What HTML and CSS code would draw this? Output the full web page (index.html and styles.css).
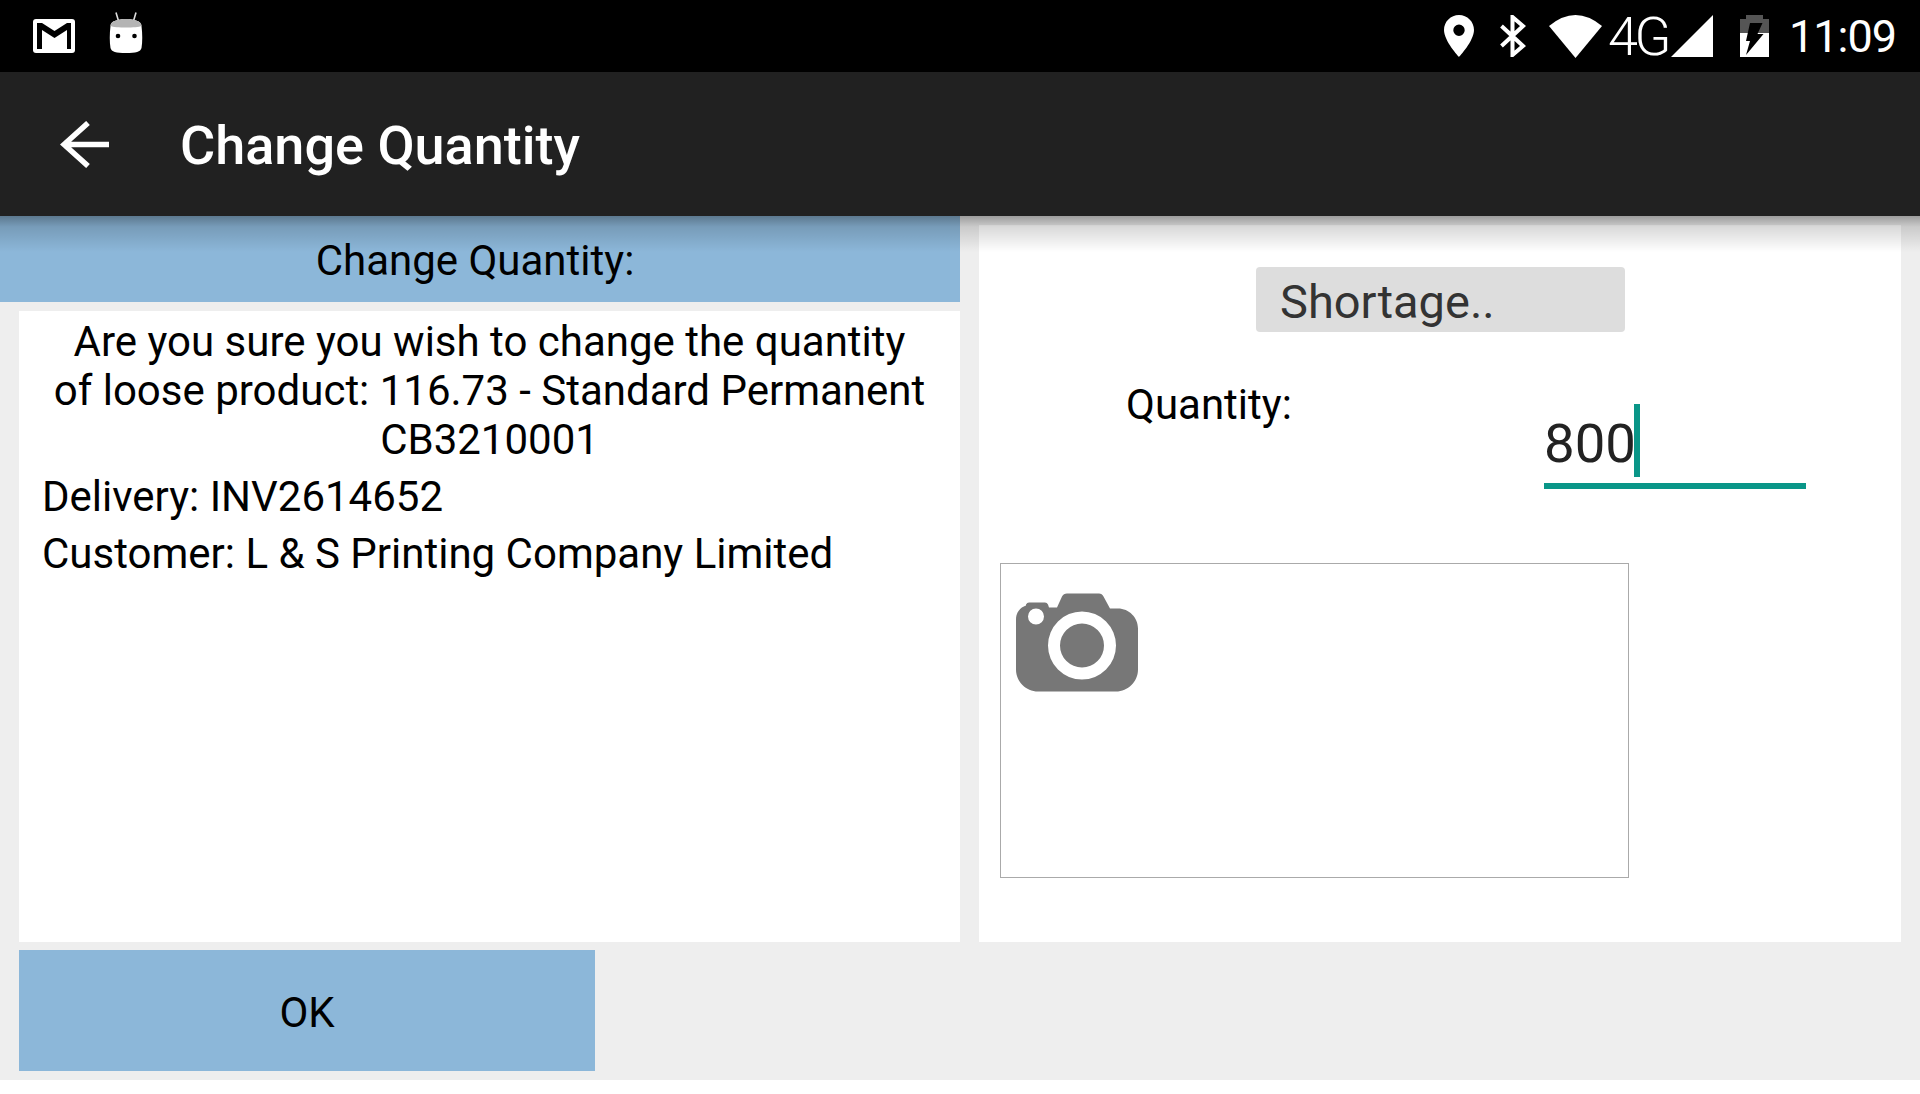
FILE: index.html
```html
<!DOCTYPE html>
<html lang="en">
<head>
<meta charset="utf-8">
<title>Change Quantity</title>
<link rel="stylesheet" href="styles.css">
</head>
<body>
<div class="screen">
  <header class="status">
    <svg class="ic-gmail" viewBox="0 0 42 34"><rect width="42" height="34" rx="3" fill="#fff"/><path d="M4 4H9L21.500 12 34 4H38V30H34V11L21.500 19 9 11V30H4Z" fill="#000"/></svg>
    <svg class="ic-bot" viewBox="0 0 34 42"><path d="M7 0.500 9.500 9M27 0.500 24.500 9" stroke="#ddd" stroke-width="1.600" fill="none"/><path d="M1.500 14C1.500 9 9 7 17 7S32.500 9 32.500 14C33.500 22 33.500 30 32.500 36 31.500 40 27 41 17 41S2.500 40 1.500 36C.5 30 .5 22 1.500 14Z" fill="#fff"/><path d="M1.500 14C1.500 9 9 7 17 7S32.500 9 32.500 14C28 16 6 16 1.500 14Z" fill="#b4b4b4"/><circle cx="9" cy="24" r="2.300" fill="#000"/><circle cx="25.500" cy="24" r="2.300" fill="#000"/></svg>
    <div class="status-right">
      <svg class="ic-loc" viewBox="0 0 30 42"><path fill-rule="evenodd" d="M15 0C6.700 0 0 6.700 0 15 0 26 15 42 15 42S30 26 30 15C30 6.700 23.300 0 15 0ZM15 9.500A5.700 5.700 0 1 1 15 20.900 5.700 5.700 0 0 1 15 9.500Z" fill="#fff"/></svg>
      <svg class="ic-bt" viewBox="0 0 26 42"><path d="M1.500 11 23 31 12.500 40V2L23 11 1.500 31" fill="none" stroke="#fff" stroke-width="4"/></svg>
      <svg class="ic-wifi" viewBox="0 0 53 43"><path d="M0 11Q26.500-11 53 11L26.500 43Z" fill="#fff"/></svg>
      <span class="net">4G</span>
      <svg class="ic-sig" viewBox="0 0 42 42"><path d="M0 42 42 0V42Z" fill="#fff"/></svg>
      <svg class="ic-bat" viewBox="0 0 29 42"><path d="M6 0H23V4H29V18H0V4H6Z" fill="#555"/><rect y="18" width="29" height="24" fill="#fff"/><path d="M10 8H22.500L17.500 19H23.500L6 40 10 26H6Z" fill="#000"/></svg>
      <span class="clock">11:09</span>
    </div>
  </header>

  <div class="appbar">
    <svg class="ic-back" viewBox="0 0 49 47"><path d="M28 2 4 23.500 28 45M5 23.500H49" fill="none" stroke="#fff" stroke-width="5.500"/></svg>
    <h1 class="title">Change Quantity</h1>
    <div class="appbar-shadow"></div>
  </div>

  <main class="content">
    <section class="left">
      <div class="left-head">Change Quantity:</div>
      <div class="left-panel">
        <p class="question">Are you sure you wish to change the quantity<br>of loose product: 116.73 - Standard Permanent<br>CB3210001</p>
        <p class="info">Delivery: INV2614652</p>
        <p class="info">Customer: L &amp; S Printing Company Limited</p>
      </div>
    </section>
    <section class="right">
      <div class="shortage">Shortage..</div>
      <div class="qty-row">
        <span class="qty-label">Quantity:</span>
        <div class="qty-field"><span class="qty-value">800</span><span class="caret"></span></div>
      </div>
      <div class="photo">
        <svg class="ic-cam" viewBox="0 0 122 98"><path fill-rule="evenodd" d="M41 14 46 3Q47.500 0 51 0H83Q86 0 87.500 3L94 15H102C113 15 122 24 122 35V76C122 88 112 98 100 98H22C10 98 0 88 0 76V26C0 19 4 14 10 12V11Q11 9 13 9H29Q31 9 32 11L33 14ZM20 15A8 8 0 1 0 20 31 8 8 0 0 0 20 15ZM66 18A34 34 0 1 0 66 86 34 34 0 0 0 66 18ZM66 30A22 22 0 1 1 66 74 22 22 0 0 1 66 30Z" fill="#777"/></svg>
      </div>
    </section>
  </main>

  <footer class="actions">
    <div class="ok">OK</div>
  </footer>
</div>
</body>
</html>
```
FILE: styles.css
```css
* { box-sizing: border-box; }
html, body { margin: 0; padding: 0; background: #fff; }
body { font-family: Roboto, "Liberation Sans", sans-serif; color: #000; }
svg { display: block; flex: none; }

.screen { width: 1920px; height: 1080px; background: #eeeeee; display: flex; flex-direction: column; overflow: hidden; }

.status { height: 72px; background: #000; display: flex; align-items: center; padding: 0 24px 0 33px; color: #fff; }
.ic-gmail { width: 42px; height: 34px; }
.ic-bot { width: 34px; height: 42px; margin-left: 34px; margin-bottom: 6px; }
.status-right { margin-left: auto; display: flex; align-items: center; }
.ic-loc { width: 30px; height: 42px; }
.ic-bt { width: 26px; height: 42px; margin-left: 26px; }
.ic-wifi { width: 53px; height: 43px; margin-left: 23px; }
.net { font-weight: 300; font-size: 54px; line-height: 72px; letter-spacing: -3.500px; margin-left: 6px; width: 63px; padding-top: 2px; }
.ic-sig { width: 42px; height: 42px; }
.ic-bat { width: 29px; height: 42px; margin-left: 27px; }
.clock { font-size: 45px; line-height: 72px; margin-left: 20px; letter-spacing: -1px; padding-top: 2px; }

.appbar { position: relative; height: 144px; background: #212121; display: flex; align-items: center; padding-left: 60px; z-index: 1; }
.ic-back { width: 49px; height: 47px; }
.title { margin: 3px 0 0 71px; color: #fff; font-size: 54px; font-weight: 500; line-height: 72px; }
.appbar-shadow { position: absolute; left: 0; right: 0; top: 100%; height: 36px; background: linear-gradient(rgba(0,0,0,.34), rgba(0,0,0,.15) 30%, rgba(0,0,0,0)); }

.content { display: flex; height: 726px; }
.left { width: 960px; display: flex; flex-direction: column; }
.left-head { height: 86px; background: #8cb7d9; display: flex; align-items: center; justify-content: center; padding: 2px 10px 0 0; font-size: 42px; }
.left-panel { margin: 9px 0 0 19px; flex: 1; background: #fff; padding-top: 6px; font-size: 42px; line-height: 49px; }
.question { margin: 0 0 8px; text-align: center; }
.info { margin: 0 0 8px; padding-left: 23px; }

.right { width: 922px; margin: 9px 0 0 19px; background: #fff; position: relative; padding: 42px 0 0 21px; display: flex; flex-direction: column; }
.shortage { align-self: flex-start; margin-left: 256px; width: 369px; height: 65px; background: #ddd; border-radius: 4px; padding-left: 24px; font-size: 47px; line-height: 69px; color: #333; }
.qty-row { display: flex; height: 231px; }
.qty-label { margin: 48px 0 0 126px; font-size: 42px; line-height: 49px; height: 49px; }
.qty-field { position: absolute; left: 565px; top: 179px; width: 262px; height: 85px; border-bottom: 6px solid #0a9688; display: flex; align-items: flex-start; }
.qty-value { font-size: 54.500px; line-height: 62px; margin: 8px 0 0 0; color: #222; }
.caret { width: 6px; height: 73px; margin-left: -2px; background: #0a9688; }

.photo { width: 629px; height: 315px; border: 1px solid #aaa; padding: 29px 0 0 15px; }
.ic-cam { width: 122px; height: 99px; }

.actions { padding: 8px 0 0 19px; }
.ok { width: 576px; height: 121px; background: #8cb7d9; display: flex; align-items: center; justify-content: center; padding-top: 3px; font-size: 42px; }
```
